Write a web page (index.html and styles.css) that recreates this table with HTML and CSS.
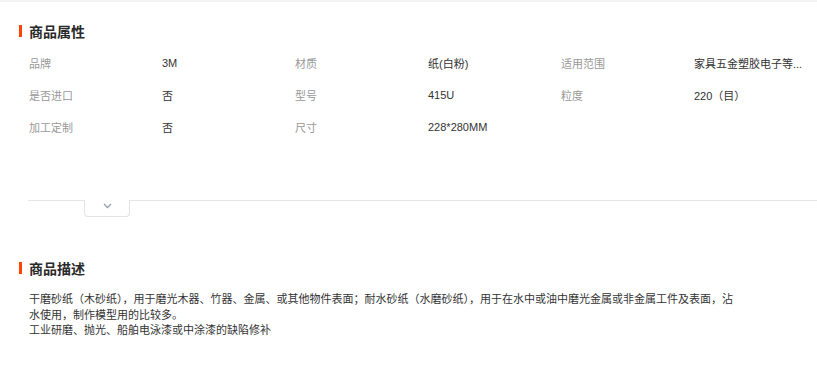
FILE: index.html
```html
<!DOCTYPE html>
<html lang="zh-CN">
<head>
<meta charset="utf-8">
<title>商品属性</title>
<link rel="stylesheet" href="styles.css">
</head>
<body>
<div class="top-strip"></div>
<section class="attrs">
  <h2 class="sec-title">商品属性</h2>
  <div class="attr-grid">
    <span class="label">品牌</span><span class="value">3M</span>
    <span class="label">材质</span><span class="value">纸(白粉)</span>
    <span class="label">适用范围</span><span class="value">家具五金塑胶电子等...</span>
    <span class="label">是否进口</span><span class="value">否</span>
    <span class="label">型号</span><span class="value">415U</span>
    <span class="label">粒度</span><span class="value">220（目）</span>
    <span class="label">加工定制</span><span class="value">否</span>
    <span class="label">尺寸</span><span class="value">228*280MM</span>
  </div>
</section>
<div class="toggle-bar">
  <div class="line line-left"></div>
  <button class="toggle-btn" type="button" aria-label="展开">
    <svg width="9" height="6" viewBox="0 0 9 6"><path d="M1 1 L4.5 4.5 L8 1" fill="none" stroke="#9a9fb0" stroke-width="1.3"/></svg>
  </button>
  <div class="line line-right"></div>
</div>
<section class="desc">
  <h2 class="sec-title">商品描述</h2>
  <p class="desc-text">干磨砂纸（木砂纸），用于磨光木器、竹器、金属、或其他物件表面；耐水砂纸（水磨砂纸），用于在水中或油中磨光金属或非金属工件及表面，沾水使用，制作模型用的比较多。<br>工业研磨、抛光、船舶电泳漆或中涂漆的缺陷修补</p>
</section>
</body>
</html>
```

FILE: styles.css
```css
html, body {
  margin: 0;
  padding: 0;
  background: #fff;
}
body {
  font-family: "Liberation Sans", "Noto Sans CJK SC", sans-serif;
  font-size: 11px;
  color: #333;
  width: 817px;
  overflow: hidden;
}
.top-strip {
  height: 2px;
  background: #f3f3f3;
}
.sec-title {
  margin: 0;
  padding-left: 19px;
  display: flex;
  align-items: center;
  font-size: 14px;
  line-height: 16px;
  font-weight: bold;
  color: #2a2a2a;
  font-family: "Noto Sans CJK SC", sans-serif;
}
.sec-title::before {
  content: "";
  width: 3px;
  height: 12px;
  background: #ff4400;
  margin-right: 7px;
}
.attrs {
  padding-top: 21px;
}
.attr-grid {
  margin-top: 8px;
  padding-left: 29px;
  display: grid;
  grid-template-columns: repeat(6, 133px);
  grid-auto-rows: 32px;
  align-items: center;
}
.label {
  color: #999;
  white-space: nowrap;
}
.value {
  color: #333;
  white-space: nowrap;
}
.toggle-bar {
  margin-top: 57px;
  margin-left: 28px;
  display: flex;
  align-items: flex-start;
}
.line {
  height: 0;
  border-top: 1px solid #e6e6e6;
}
.line-left {
  width: 56px;
}
.line-right {
  flex: 1;
}
.toggle-btn {
  width: 46px;
  height: 17px;
  padding: 0 0 5px;
  margin: 0;
  background: #fff;
  border: 1px solid #e3e3e3;
  border-top: none;
  border-radius: 0 0 4px 4px;
  display: flex;
  align-items: center;
  justify-content: center;
  cursor: pointer;
}
.toggle-btn svg {
  display: block;
}
.desc {
  margin-top: 43px;
}
.desc-text {
  margin: 15px 0 0;
  padding-left: 29px;
  width: 710px;
  line-height: 15.5px;
  color: #333;
  font-family: "Noto Sans CJK SC", sans-serif;
}
```
